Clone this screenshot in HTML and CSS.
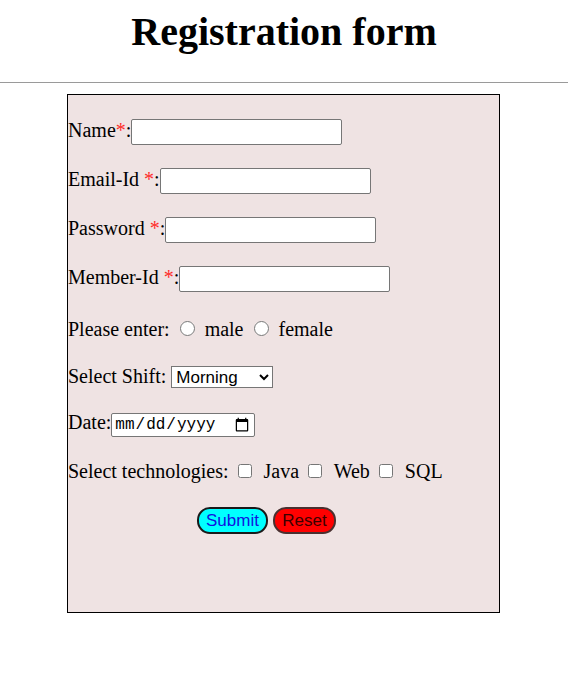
FILE: index.html
```html
<!DOCTYPE html>
<html>
<head>
<meta charset="utf-8">
<title>Registration form</title>
<link rel="stylesheet" href="styles.css">
</head>
<body>
<h1 class="title">Registration form</h1>
<hr class="rule">
<form class="reg-form">
  <p class="row">Name<span class="req">*</span>:<input class="text-in" type="text"></p>
  <p class="row">Email-Id <span class="req">*</span>:<input class="text-in" type="email"></p>
  <p class="row">Password <span class="req">*</span>:<input class="text-in" type="password"></p>
  <p class="row">Member-Id <span class="req">*</span>:<input class="text-in" type="text"></p>
  <p class="row row-radio">Please enter: <input class="radio" type="radio" name="g"> male <input class="radio" type="radio" name="g"> female</p>
  <p class="row">Select Shift: <select class="shift"><option>Morning</option><option>Evening</option></select></p>
  <p class="row row-date">Date:<input class="date-in" type="date"></p>
  <p class="row">Select technologies: <input class="check" type="checkbox"> Java <input class="check" type="checkbox"> Web <input class="check" type="checkbox"> SQL</p>
  <div class="buttons"><button class="btn btn-submit" type="button">Submit</button><button class="btn btn-reset" type="reset">Reset</button></div>
</form>
</body>
</html>
```
FILE: styles.css
```css
html, body {
  margin: 0;
  padding: 0;
  background: #ffffff;
}
body {
  font-family: "Liberation Serif", "Times New Roman", serif;
  color: #000;
}
.title {
  text-align: center;
  font-size: 40px;
  font-weight: bold;
  margin: 9px 0 0 0;
  line-height: 46px;
}
.rule {
  margin: 27px 0 11px 0;
  border: 0;
  border-top: 1px solid #9a9a9a;
  height: 0;
}
.reg-form {
  width: 431px;
  height: 517px;
  margin: 0 0 0 67px;
  border: 1px solid #000;
  background: #efe3e3;
  font-size: 20px;
  padding: 0;
  box-sizing: content-box;
}
.row {
  margin: 21px 0 0 0;
  line-height: 28px;
  height: 28px;
}
.row-radio {
  margin-top: 24px;
  margin-bottom: -2px;
}
.row-date {
  margin-top: 18px;
}
.req {
  color: #ff2a2a;
}
.text-in {
  width: 211px;
  height: 26px;
  box-sizing: border-box;
  border: 1px solid #767676;
  border-radius: 2px;
  background: #fff;
  font-size: 16px;
  margin: 0;
}
.radio {
  width: 15px;
  height: 15px;
  margin: 0 5px 0 5px;
}
.check {
  width: 14px;
  height: 14px;
  margin: 0 7px 0 4px;
}
.shift {
  font-family: "Liberation Sans", Arial, sans-serif;
  font-size: 17px;
  width: 102px;
  height: 22px;
  border: 1px solid #767676;
  border-radius: 0;
  background: #fff;
  margin: 0;
}
.date-in {
  font-family: "Liberation Mono", monospace;
  font-size: 16px;
  width: 144px;
  height: 24px;
  box-sizing: border-box;
  border: 1px solid #767676;
  border-radius: 2px;
  background: #fff;
  padding: 1px 2px;
  margin: 0;
}
.buttons {
  margin: 22px 0 0 129px;
  display: flex;
  gap: 5px;
}
.btn {
  font-family: "Liberation Sans", Arial, sans-serif;
  font-size: 17px;
  height: 27px;
  border-radius: 13px;
  border: 2px solid #1a1a1a;
  padding: 0 5px;
  margin: 0;
}
.btn-submit {
  background: #00ffff;
  color: #1212e0;
  width: 71px;
}
.btn-reset {
  background: #ff0000;
  color: #3a0000;
  width: 63px;
  border-color: #4a3030;
}
```
